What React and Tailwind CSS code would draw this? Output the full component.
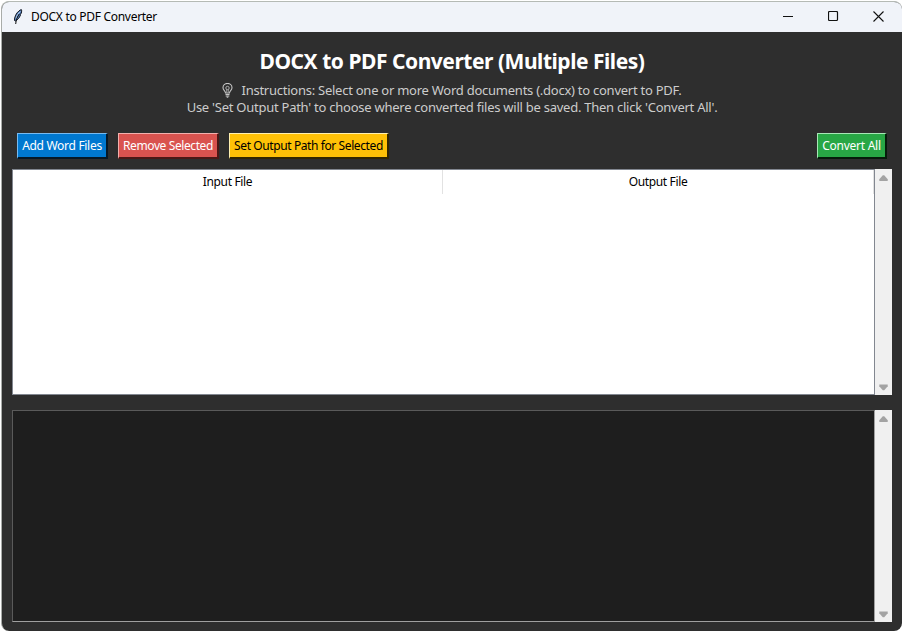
function Feather() {
  return (
    <svg width="12" height="16" viewBox="0 0 12 16" className="-mt-px shrink-0">
      <path d="M9.300.5C6 2 3.600 5 2.700 9L2.500 11.500 3.500 12C6 10.500 7.600 8.500 7.900 7.200L8.500 6.200 8.400 5.500 9.300 4C9.700 2.500 9.800 1.200 9.300.5Z" fill="#4f79b5" stroke="#10151f" strokeWidth="1" />
      <path d="M8.300 2.500C6 4.500 4.700 7 4 9.500" fill="none" stroke="#b9d4f2" strokeWidth="1" />
      <path d="M7.300 5C5.500 7.500 4 10.500 3.700 15" fill="none" stroke="#111" strokeWidth="1" />
    </svg>
  );
}

function Bulb() {
  return (
    <svg width="11" height="15" viewBox="0 0 11 15" fill="none" stroke="#c6c6c6" className="shrink-0">
      <path d="M3.500 10C3.500 8 1 7.200 1 4.700A4.400 4.200 0 0 1 10 4.700C10 7.200 7.500 8 7.500 10Z" strokeWidth="1.100" />
      <path d="M4.700 9.500V6.500M6.300 9.500V6.500" strokeWidth=".7" />
      <circle cx="5.500" cy="5" r="1.700" strokeWidth=".8" />
      <path d="M3.500 11.500H7.500M3.700 13H7.300M4.700 14.200H6.300" strokeWidth="1.100" />
    </svg>
  );
}

function Button({ className, children }) {
  return (
    <button className={"flex h-[26px] shrink-0 items-center justify-center border-t border-l border-r-2 border-b-2 pt-px text-[12px] whitespace-nowrap " + className}>
      {children}
    </button>
  );
}

function Scrollbar() {
  return (
    <div className="flex w-[17px] shrink-0 flex-col items-center justify-between bg-[#f0f0f0] pt-[6px] pb-[4px]">
      <svg width="9" height="7" viewBox="0 0 9 7"><path d="M3.800.2H5.200L8.700 4.300V6H.3V4.300Z" fill="#a3a3a3" /></svg>
      <svg width="9" height="7" viewBox="0 0 9 7"><path d="M.3.5H8.700V2.200L5.200 6.300H3.800L.3 2.200Z" fill="#a3a3a3" /></svg>
    </div>
  );
}

export default function App() {
  return (
    <div className="h-[631px] w-[902px] overflow-hidden bg-white pt-px pl-px font-['Noto_Sans',sans-serif]">
      <div className="flex h-[630px] w-[901px] flex-col overflow-hidden rounded-[8px] border-t border-l border-t-[#b5bab5] border-l-[#a9aca9] bg-[#2e2e2e]">
        <header className="flex h-[30px] shrink-0 items-center bg-[#f0f3f9] pl-[10px] text-black">
          <Feather />
          <span className="ml-[7px] text-[12px] tracking-[-0.29px]">DOCX to PDF Converter</span>
          <div className="mr-[17px] ml-auto flex items-center gap-[34px] pr-px pb-[2px]">
            <svg width="11" height="11" viewBox="0 0 11 11"><path d="M0 5.500H10" stroke="#111" /></svg>
            <svg width="11" height="11" viewBox="0 0 11 11"><rect x=".5" y=".5" width="9" height="9" rx="1" fill="none" stroke="#111" strokeWidth="1.200" /></svg>
            <svg width="11" height="11" viewBox="0 0 11 11"><path d="M.5.5 10.500 10.500M10.500.5.5 10.500" stroke="#111" strokeWidth="1.100" /></svg>
          </div>
        </header>
        <main className="flex min-h-0 grow flex-col pr-[10px] pb-[9px] pl-[10px]">
          <h1 className="mt-[15px] h-[30px] text-center text-[21px] leading-[29px] font-bold tracking-[-0.47px] whitespace-nowrap text-white">DOCX to PDF Converter (Multiple Files)</h1>
          <div className="mt-[5px] flex flex-col items-center text-[13px] leading-[17px] tracking-[-0.25px] whitespace-nowrap text-[#cccccc]">
            <p className="flex items-center gap-[8px]"><Bulb /><span>Instructions: Select one or more Word documents (.docx) to convert to PDF.</span></p>
            <p>Use 'Set Output Path' to choose where converted files will be saved. Then click 'Convert All'.</p>
          </div>
          <div className="mt-[17px] flex gap-[10px] pr-[5px] pl-[5px]">
            <Button className="w-[91px] border-t-[#78baf0] border-r-[#061827] border-b-[#061827] border-l-[#78baf0] bg-[#0078d0] tracking-[-0.3px] text-white">Add Word Files</Button>
            <Button className="w-[101px] border-t-[#f3b0ad] border-r-[#4a1816] border-b-[#4a1816] border-l-[#f3b0ad] bg-[#d9534f] tracking-[-0.4px] text-white">Remove Selected</Button>
            <Button className="w-[160px] border-t-[#fff0b0] border-r-[#332700] border-b-[#332700] border-l-[#fff0b0] bg-[#ffc107] tracking-[-0.4px] text-black">Set Output Path for Selected</Button>
            <Button className="ml-auto w-[70px] border-t-[#a8e6b6] border-r-[#061c0b] border-b-[#061c0b] border-l-[#a8e6b6] bg-[#28a745] tracking-[-0.25px] text-white">Convert All</Button>
          </div>
          <section className="mt-[10px] flex h-[226px] shrink-0">
            <div className="flex grow border border-[#828790] bg-white text-[12px] tracking-[-0.35px] text-black">
              <div className="flex h-[24px] w-[430px] items-center justify-center border-r border-[#e2e2e2]">Input File</div>
              <div className="flex h-[24px] grow items-center justify-center border-r border-[#e2e2e2]">Output File</div>
            </div>
            <Scrollbar />
          </section>
          <section className="mt-[15px] flex h-[212px] shrink-0">
            <div className="grow border border-t-[#5a5a5a] border-r-[#a0a0a0] border-b-[#a0a0a0] border-l-[#5a5a5a] bg-[#1e1e1e]" />
            <Scrollbar />
          </section>
        </main>
      </div>
    </div>
  );
}
